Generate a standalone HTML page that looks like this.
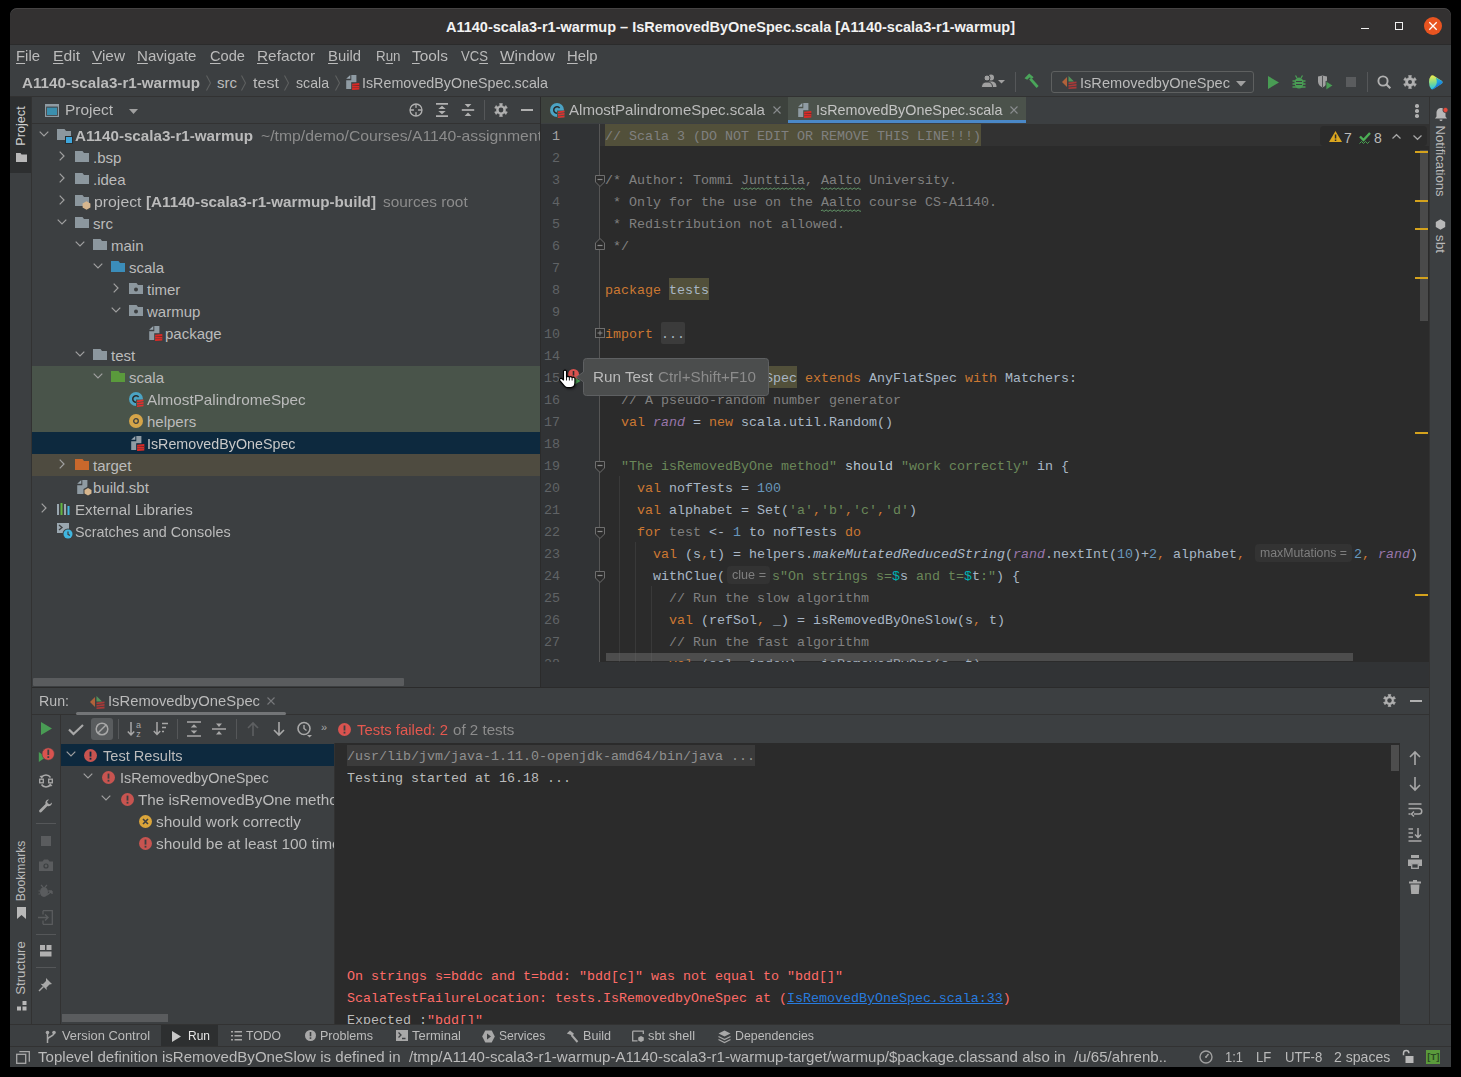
<!DOCTYPE html>
<html><head><meta charset="utf-8">
<style>
*{box-sizing:border-box;margin:0;padding:0}
html,body{width:1461px;height:1077px;overflow:hidden;background:#000}
body{position:relative;font-family:"Liberation Sans",sans-serif;color:#bbbbbb;font-size:15px}
.a{position:absolute}
.t{position:absolute;white-space:pre;line-height:20px}
.m{position:absolute;font-family:"Liberation Mono",monospace;font-size:13.33px;line-height:22px;white-space:pre}
u{text-decoration:underline;text-underline-offset:2px;text-decoration-thickness:1px}
svg{position:absolute;overflow:visible}
i{font-style:italic}
</style></head><body>
<div class="a" style="left:10px;top:8px;width:1441px;height:1059px;background:#3c3f41;border-radius:7px 7px 0 0;overflow:hidden">
<div class="a" style="left:0;top:0;width:1441px;height:36px;background:#333131;border-radius:7px 7px 0 0;box-shadow:inset 0 1px 0 rgba(255,255,255,0.09)"></div>
<div class="a" style="left:0;top:36px;width:1441px;height:1px;background:#262626"></div>
</div>
<div class="a" style="left:10px;top:44px;width:1441px;height:1px;background:#2b2b2b;"></div>
<div class="a" style="left:10px;top:96px;width:1441px;height:1px;background:#323232;"></div>
<div class="a" style="left:10px;top:97px;width:21px;height:927px;background:#3c3f41;"></div>
<div class="a" style="left:31px;top:97px;width:1px;height:927px;background:#323232;"></div>
<div class="a" style="left:540px;top:97px;width:1px;height:590px;background:#2b2b2b;"></div>
<div class="a" style="left:32px;top:123px;width:508px;height:1px;background:#323232;"></div>
<div class="a" style="left:541px;top:124px;width:888px;height:538px;background:#2b2b2b;"></div>
<div class="a" style="left:541px;top:662px;width:888px;height:25px;background:#313335;"></div>
<div class="a" style="left:1429px;top:97px;width:1px;height:927px;background:#323232;"></div>
<div class="a" style="left:32px;top:687px;width:1397px;height:1px;background:#2b2b2b;"></div>
<div class="a" style="left:32px;top:714px;width:1397px;height:1px;background:#323232;"></div>
<div class="a" style="left:335px;top:743px;width:1065px;height:281px;background:#2b2b2b;"></div>
<div class="a" style="left:10px;top:1024px;width:1441px;height:1px;background:#323232;"></div>
<div class="a" style="left:10px;top:1046px;width:1441px;height:1px;background:#323232;"></div>
<div class="t" style="left:446px;top:17.00px;font-size:14.5px;color:#f2f2f2;font-weight:bold;transform:scaleX(1.0000);transform-origin:0 0;">A1140-scala3-r1-warmup – IsRemovedByOneSpec.scala [A1140-scala3-r1-warmup]</div>
<div class="a" style="left:1361px;top:28px;width:8px;height:1.3px;background:#f0f0f0;"></div>
<div class="a" style="left:1394.8px;top:21.8px;width:8.6px;height:8.6px;background:transparent;border:1.4px solid #f0f0f0"></div>
<div class="a" style="left:1423.7px;top:16.7px;width:18.6px;height:18.6px;border-radius:50%;background:#e95420"></div>
<svg style="left:1429px;top:22px;" width="8" height="8" viewBox="0 0 8 8"><path d="M0.3 0.3L7.7 7.7M7.7 0.3L0.3 7.7" stroke="#fff" stroke-width="1.3"/></svg>
<div class="t" style="left:16px;top:46.00px;font-size:15px;color:#bbbbbb;font-weight:normal;transform:scaleX(0.9922);transform-origin:0 0;"><u>F</u>ile</div>
<div class="t" style="left:53px;top:46.00px;font-size:15px;color:#bbbbbb;font-weight:normal;transform:scaleX(1.0441);transform-origin:0 0;"><u>E</u>dit</div>
<div class="t" style="left:92px;top:46.00px;font-size:15px;color:#bbbbbb;font-weight:normal;transform:scaleX(1.0233);transform-origin:0 0;"><u>V</u>iew</div>
<div class="t" style="left:137px;top:46.00px;font-size:15px;color:#bbbbbb;font-weight:normal;transform:scaleX(1.0047);transform-origin:0 0;"><u>N</u>avigate</div>
<div class="t" style="left:210px;top:46.00px;font-size:15px;color:#bbbbbb;font-weight:normal;transform:scaleX(0.9756);transform-origin:0 0;"><u>C</u>ode</div>
<div class="t" style="left:257px;top:46.00px;font-size:15px;color:#bbbbbb;font-weight:normal;transform:scaleX(1.0229);transform-origin:0 0;"><u>R</u>efactor</div>
<div class="t" style="left:328px;top:46.00px;font-size:15px;color:#bbbbbb;font-weight:normal;transform:scaleX(0.9888);transform-origin:0 0;"><u>B</u>uild</div>
<div class="t" style="left:375.5px;top:46.00px;font-size:15px;color:#bbbbbb;font-weight:normal;transform:scaleX(0.8899);transform-origin:0 0;">R<u>u</u>n</div>
<div class="t" style="left:412px;top:46.00px;font-size:15px;color:#bbbbbb;font-weight:normal;transform:scaleX(1.0277);transform-origin:0 0;"><u>T</u>ools</div>
<div class="t" style="left:461px;top:46.00px;font-size:15px;color:#bbbbbb;font-weight:normal;transform:scaleX(0.8749);transform-origin:0 0;">VC<u>S</u></div>
<div class="t" style="left:500px;top:46.00px;font-size:15px;color:#bbbbbb;font-weight:normal;transform:scaleX(1.0304);transform-origin:0 0;"><u>W</u>indow</div>
<div class="t" style="left:567px;top:46.00px;font-size:15px;color:#bbbbbb;font-weight:normal;transform:scaleX(0.9911);transform-origin:0 0;"><u>H</u>elp</div>
<div class="t" style="left:22px;top:73.00px;font-size:15px;color:#bbbbbb;font-weight:bold;transform:scaleX(1.0117);transform-origin:0 0;">A1140-scala3-r1-warmup</div>
<div class="t" style="left:217px;top:73.00px;font-size:15px;color:#bbbbbb;font-weight:normal;transform:scaleX(1.0000);transform-origin:0 0;">src</div>
<div class="t" style="left:253px;top:73.00px;font-size:15px;color:#bbbbbb;font-weight:normal;transform:scaleX(1.0749);transform-origin:0 0;">test</div>
<div class="t" style="left:296px;top:73.00px;font-size:15px;color:#bbbbbb;font-weight:normal;transform:scaleX(0.9420);transform-origin:0 0;">scala</div>
<div class="t" style="left:362px;top:73.00px;font-size:15px;color:#bbbbbb;font-weight:normal;transform:scaleX(0.9533);transform-origin:0 0;">IsRemovedByOneSpec.scala</div>
<svg style="left:204.5px;top:74px;" width="7" height="18" viewBox="0 0 7 18"><path d="M1.5 1.5L5.5 9L1.5 16.5" stroke="#5e6060" stroke-width="1.1" fill="none"/></svg>
<svg style="left:240px;top:74px;" width="7" height="18" viewBox="0 0 7 18"><path d="M1.5 1.5L5.5 9L1.5 16.5" stroke="#5e6060" stroke-width="1.1" fill="none"/></svg>
<svg style="left:283px;top:74px;" width="7" height="18" viewBox="0 0 7 18"><path d="M1.5 1.5L5.5 9L1.5 16.5" stroke="#5e6060" stroke-width="1.1" fill="none"/></svg>
<svg style="left:333.5px;top:74px;" width="7" height="18" viewBox="0 0 7 18"><path d="M1.5 1.5L5.5 9L1.5 16.5" stroke="#5e6060" stroke-width="1.1" fill="none"/></svg>
<svg style="left:45px;top:104px;" width="14" height="13" viewBox="0 0 14 13"><rect x="0" y="0" width="14" height="13" fill="#8f9ba3"/><rect x="1.2" y="2.6" width="11.6" height="9.2" fill="#3c3f41"/><rect x="2" y="3.6" width="10" height="7.4" fill="#3b8fae"/></svg>
<div class="t" style="left:65px;top:100.00px;font-size:15px;color:#bbbbbb;font-weight:normal;transform:scaleX(1.0281);transform-origin:0 0;">Project</div>
<svg style="left:128.6px;top:109px;" width="9" height="5" viewBox="0 0 9 5"><path d="M0 0H9L4.5 5Z" fill="#a0a0a0"/></svg>
<svg style="left:409px;top:103px;" width="14" height="14" viewBox="0 0 14 14"><circle cx="7" cy="7" r="6" stroke="#b0b0b0" stroke-width="1.3" fill="none"/><path d="M7 1V13M1 7H13" stroke="#b0b0b0" stroke-width="1.3"/><circle cx="7" cy="7" r="2.2" fill="#3c3f41"/></svg>
<svg style="left:435px;top:103px;" width="14" height="14" viewBox="0 0 14 14"><path d="M1 0.8H13M1 13.2H13" stroke="#b0b0b0" stroke-width="1.7"/><path d="M3.3 6L7 2.8L10.7 6Z M3.3 8L7 11.2L10.7 8Z" fill="#b0b0b0"/></svg>
<svg style="left:461px;top:103px;" width="14" height="14" viewBox="0 0 14 14"><path d="M0.8 7H13.2" stroke="#b0b0b0" stroke-width="1.7"/><path d="M3.6 1H10.4L7 4.6Z M3.6 13H10.4L7 9.4Z" fill="#b0b0b0"/></svg>
<div class="a" style="left:484px;top:100px;width:1px;height:20px;background:#555759;"></div>
<svg style="left:494px;top:103px;" width="14" height="14" viewBox="0 0 14 14"><path d="M5.52 0.57 L8.48 0.57 L7.90 2.39 L10.55 3.92 L11.83 2.50 L13.31 5.07 L11.44 5.47 L11.44 8.53 L13.31 8.93 L11.83 11.50 L10.55 10.08 L7.90 11.61 L8.48 13.43 L5.52 13.43 L6.10 11.61 L3.45 10.08 L2.17 11.50 L0.69 8.93 L2.56 8.53 L2.56 5.47 L0.69 5.07 L2.17 2.50 L3.45 3.92 L6.10 2.39Z" fill="#b0b0b0" stroke="#b0b0b0" stroke-width="0.6" stroke-linejoin="round"/><circle cx="7" cy="7" r="2.4" fill="#3c3f41"/></svg>
<div class="a" style="left:521px;top:109px;width:12px;height:2px;background:#b0b0b0;"></div>
<div class="a" style="left:32px;top:366px;width:508px;height:66px;background:#49544a;"></div>
<div class="a" style="left:32px;top:432px;width:508px;height:22px;background:#0d293e;"></div>
<div class="a" style="left:32px;top:454px;width:508px;height:22px;background:#4e4b40;"></div>
<svg style="left:38.5px;top:131.0px;" width="10" height="6" viewBox="0 0 10 6"><path d="M0.7 0.7L5 5L9.3 0.7" stroke="#a0a0a0" stroke-width="1.2" fill="none"/></svg>
<svg style="left:57px;top:129px;" width="14" height="11" viewBox="0 0 14 11"><path d="M0 0H7.5L9 2H14V11H0Z" fill="#8c979e"/></svg>
<div class="a" style="left:65px;top:136px;width:8px;height:8px;background:#3ea6dc;border:1px solid #2b2d2e;background-clip:padding-box"></div>
<svg style="left:58.5px;top:151.0px;" width="6" height="10" viewBox="0 0 6 10"><path d="M0.7 0.7L5 5L0.7 9.3" stroke="#a0a0a0" stroke-width="1.2" fill="none"/></svg>
<svg style="left:75px;top:151px;" width="14" height="11" viewBox="0 0 14 11"><path d="M0 0H7.5L9 2H14V11H0Z" fill="#8c979e"/></svg>
<svg style="left:58.5px;top:173.0px;" width="6" height="10" viewBox="0 0 6 10"><path d="M0.7 0.7L5 5L0.7 9.3" stroke="#a0a0a0" stroke-width="1.2" fill="none"/></svg>
<svg style="left:75px;top:173px;" width="14" height="11" viewBox="0 0 14 11"><path d="M0 0H7.5L9 2H14V11H0Z" fill="#8c979e"/></svg>
<svg style="left:58.5px;top:195.0px;" width="6" height="10" viewBox="0 0 6 10"><path d="M0.7 0.7L5 5L0.7 9.3" stroke="#a0a0a0" stroke-width="1.2" fill="none"/></svg>
<svg style="left:75px;top:195px;" width="14" height="11" viewBox="0 0 14 11"><path d="M0 0H7.5L9 2H14V11H0Z" fill="#8c979e"/></svg>
<svg style="left:82px;top:201px;" width="9" height="9" viewBox="0 0 9 9"><path d="M4.5 0.3L8.4 2.4V6.6L4.5 8.7L0.6 6.6V2.4Z" fill="#d7b68e"/></svg>
<svg style="left:56.5px;top:219.0px;" width="10" height="6" viewBox="0 0 10 6"><path d="M0.7 0.7L5 5L9.3 0.7" stroke="#a0a0a0" stroke-width="1.2" fill="none"/></svg>
<svg style="left:75px;top:217px;" width="14" height="11" viewBox="0 0 14 11"><path d="M0 0H7.5L9 2H14V11H0Z" fill="#8c979e"/></svg>
<svg style="left:74.5px;top:241.0px;" width="10" height="6" viewBox="0 0 10 6"><path d="M0.7 0.7L5 5L9.3 0.7" stroke="#a0a0a0" stroke-width="1.2" fill="none"/></svg>
<svg style="left:93px;top:239px;" width="14" height="11" viewBox="0 0 14 11"><path d="M0 0H7.5L9 2H14V11H0Z" fill="#8c979e"/></svg>
<svg style="left:92.5px;top:263.0px;" width="10" height="6" viewBox="0 0 10 6"><path d="M0.7 0.7L5 5L9.3 0.7" stroke="#a0a0a0" stroke-width="1.2" fill="none"/></svg>
<svg style="left:111px;top:261px;" width="14" height="11" viewBox="0 0 14 11"><path d="M0 0H7.5L9 2H14V11H0Z" fill="#3b8dba"/></svg>
<svg style="left:112.5px;top:283.0px;" width="6" height="10" viewBox="0 0 6 10"><path d="M0.7 0.7L5 5L0.7 9.3" stroke="#a0a0a0" stroke-width="1.2" fill="none"/></svg>
<svg style="left:129px;top:283px;" width="14" height="11" viewBox="0 0 14 11"><path d="M0 0H7.5L9 2H14V11H0Z" fill="#8c979e"/><circle cx="7" cy="6.5" r="2" fill="#3c3f41"/></svg>
<svg style="left:110.5px;top:307.0px;" width="10" height="6" viewBox="0 0 10 6"><path d="M0.7 0.7L5 5L9.3 0.7" stroke="#a0a0a0" stroke-width="1.2" fill="none"/></svg>
<svg style="left:129px;top:305px;" width="14" height="11" viewBox="0 0 14 11"><path d="M0 0H7.5L9 2H14V11H0Z" fill="#8c979e"/><circle cx="7" cy="6.5" r="2" fill="#3c3f41"/></svg>
<svg style="left:148.7px;top:326px;" width="15" height="16" viewBox="0 0 15 16"><path d="M0.2 3.8L4.3 0V3.8Z" fill="#9aa7b0"/><path d="M5.3 0H10.4V8H6V14.1H0.2V5.3H5.3Z" fill="#8f9ba3"/><path d="M5.2 7.2H14V15.6H5.2Z" fill="#3c3f41"/><path d="M6.1 8.8L13.3 8.1V14.4L6.1 14.9Z" fill="#df2a26"/><path d="M6.1 10.4H13.3V11M6.1 12.6H13.3" stroke="#7c3434" stroke-width="0.7"/></svg>
<svg style="left:74.5px;top:351.0px;" width="10" height="6" viewBox="0 0 10 6"><path d="M0.7 0.7L5 5L9.3 0.7" stroke="#a0a0a0" stroke-width="1.2" fill="none"/></svg>
<svg style="left:93px;top:349px;" width="14" height="11" viewBox="0 0 14 11"><path d="M0 0H7.5L9 2H14V11H0Z" fill="#8c979e"/></svg>
<svg style="left:92.5px;top:373.0px;" width="10" height="6" viewBox="0 0 10 6"><path d="M0.7 0.7L5 5L9.3 0.7" stroke="#a0a0a0" stroke-width="1.2" fill="none"/></svg>
<svg style="left:111px;top:371px;" width="14" height="11" viewBox="0 0 14 11"><path d="M0 0H7.5L9 2H14V11H0Z" fill="#5a9a3c"/></svg>
<svg style="left:129px;top:392px;" width="15" height="15" viewBox="0 0 15 15"><circle cx="7" cy="7" r="7" fill="#4ba3c3"/><path d="M9.6 5.2A3.2 3.2 0 1 0 9.6 8.8" stroke="#2b2b2b" stroke-width="1.5" fill="none"/><path d="M7 7.5H14.5V15H7Z" fill="#49544a"/><path d="M8 8.6L14.5 7.6V9.3L8 10.3Z M8 11L14.5 10V11.7L8 12.7Z M8 13.4L14.5 12.4V14.2L8 15Z" fill="#e0302f"/></svg>
<svg style="left:129px;top:414px;" width="14" height="14" viewBox="0 0 14 14"><circle cx="7" cy="7" r="7" fill="#d5a549"/><circle cx="7" cy="7" r="2.3" stroke="#3c3f41" stroke-width="1.3" fill="none"/></svg>
<svg style="left:130.7px;top:436px;" width="15" height="16" viewBox="0 0 15 16"><path d="M0.2 3.8L4.3 0V3.8Z" fill="#9aa7b0"/><path d="M5.3 0H10.4V8H6V14.1H0.2V5.3H5.3Z" fill="#8f9ba3"/><path d="M5.2 7.2H14V15.6H5.2Z" fill="#0d293e"/><path d="M6.1 8.8L13.3 8.1V14.4L6.1 14.9Z" fill="#df2a26"/><path d="M6.1 10.4H13.3V11M6.1 12.6H13.3" stroke="#7c3434" stroke-width="0.7"/></svg>
<svg style="left:58.5px;top:459.0px;" width="6" height="10" viewBox="0 0 6 10"><path d="M0.7 0.7L5 5L0.7 9.3" stroke="#a0a0a0" stroke-width="1.2" fill="none"/></svg>
<svg style="left:75px;top:459px;" width="14" height="11" viewBox="0 0 14 11"><path d="M0 0H7.5L9 2H14V11H0Z" fill="#c9682c"/></svg>
<svg style="left:77px;top:480px;" width="16" height="15" viewBox="0 0 16 15"><path d="M0.2 3.8L4.3 0V3.8Z" fill="#9aa7b0"/><path d="M5.3 0H10.4V14.1H0.2V5.3H5.3Z" fill="#8f9ba3"/><path d="M11 6.5L15.5 9V14L11 16.5L6.5 14V9Z" fill="#3c3f41"/><path d="M11 8L14.5 10V13.6L11 15.5L7.5 13.6V10Z" fill="#d7b68e"/></svg>
<svg style="left:40.5px;top:503.0px;" width="6" height="10" viewBox="0 0 6 10"><path d="M0.7 0.7L5 5L0.7 9.3" stroke="#a0a0a0" stroke-width="1.2" fill="none"/></svg>
<svg style="left:57px;top:503px;" width="14" height="12" viewBox="0 0 14 12"><rect x="0" y="1" width="2" height="11" fill="#9aa7b0"/><rect x="3.5" y="0" width="2" height="12" fill="#62b543"/><rect x="7" y="1" width="2" height="11" fill="#9aa7b0"/><rect x="10.5" y="3" width="2" height="9" fill="#40b6e0"/></svg>
<svg style="left:57px;top:523px;" width="16" height="16" viewBox="0 0 16 16"><path d="M0 0H12V10H0Z" fill="#9aa7b0"/><path d="M2 2L5 4.5L2 7" stroke="#3c3f41" stroke-width="1.3" fill="none"/><circle cx="11" cy="11" r="5.5" fill="#3c3f41"/><circle cx="11" cy="11" r="4.5" fill="#40b6e0"/><path d="M11 8.5V11.3L13 12.5" stroke="#3c3f41" stroke-width="1.2" fill="none"/></svg>
<div class="t" style="left:75px;top:125.50px;font-size:15px;color:#bbbbbb;font-weight:bold;transform:scaleX(1.0117);transform-origin:0 0;">A1140-scala3-r1-warmup</div>
<div class="a" style="left:260px;top:124px;width:280px;height:22px;overflow:hidden">
<div class="t" style="left:0.5px;top:1.50px;font-size:15px;color:#8c8c8c;font-weight:normal;transform:scaleX(1.0494);transform-origin:0 0;">~/tmp/demo/Courses/A1140-assignment</div>
</div>
<div class="t" style="left:93px;top:147.50px;font-size:15px;color:#bbbbbb;font-weight:normal;">.bsp</div>
<div class="t" style="left:93px;top:169.50px;font-size:15px;color:#bbbbbb;font-weight:normal;">.idea</div>
<div class="t" style="left:93.5px;top:191.50px;font-size:15px;color:#bbbbbb;font-weight:normal;transform:scaleX(1.0548);transform-origin:0 0;">project</div>
<div class="t" style="left:145.5px;top:191.50px;font-size:15px;color:#bbbbbb;font-weight:bold;transform:scaleX(1.0143);transform-origin:0 0;">[A1140-scala3-r1-warmup-build]</div>
<div class="t" style="left:383.4px;top:191.50px;font-size:15px;color:#8c8c8c;font-weight:normal;transform:scaleX(1.0261);transform-origin:0 0;">sources root</div>
<div class="t" style="left:93px;top:213.50px;font-size:15px;color:#bbbbbb;font-weight:normal;">src</div>
<div class="t" style="left:111px;top:235.50px;font-size:15px;color:#bbbbbb;font-weight:normal;">main</div>
<div class="t" style="left:129px;top:257.50px;font-size:15px;color:#bbbbbb;font-weight:normal;">scala</div>
<div class="t" style="left:147px;top:279.50px;font-size:15px;color:#bbbbbb;font-weight:normal;">timer</div>
<div class="t" style="left:147px;top:301.50px;font-size:15px;color:#bbbbbb;font-weight:normal;">warmup</div>
<div class="t" style="left:165px;top:323.50px;font-size:15px;color:#bbbbbb;font-weight:normal;">package</div>
<div class="t" style="left:111px;top:345.50px;font-size:15px;color:#bbbbbb;font-weight:normal;">test</div>
<div class="t" style="left:129px;top:367.50px;font-size:15px;color:#bbbbbb;font-weight:normal;">scala</div>
<div class="t" style="left:147px;top:389.50px;font-size:15px;color:#bbbbbb;font-weight:normal;transform:scaleX(1.0179);transform-origin:0 0;">AlmostPalindromeSpec</div>
<div class="t" style="left:147px;top:411.50px;font-size:15px;color:#bbbbbb;font-weight:normal;">helpers</div>
<div class="t" style="left:147px;top:433.50px;font-size:15px;color:#c8c8c8;font-weight:normal;transform:scaleX(0.9524);transform-origin:0 0;">IsRemovedByOneSpec</div>
<div class="t" style="left:93px;top:455.50px;font-size:15px;color:#bbbbbb;font-weight:normal;">target</div>
<div class="t" style="left:93px;top:477.50px;font-size:15px;color:#bbbbbb;font-weight:normal;">build.sbt</div>
<div class="t" style="left:75px;top:499.50px;font-size:15px;color:#bbbbbb;font-weight:normal;transform:scaleX(1.0093);transform-origin:0 0;">External Libraries</div>
<div class="t" style="left:75px;top:521.50px;font-size:15px;color:#bbbbbb;font-weight:normal;transform:scaleX(0.9570);transform-origin:0 0;">Scratches and Consoles</div>
<div class="a" style="left:33px;top:678px;width:371px;height:8px;background:#5a5c5e;border-radius:1px"></div>
<div class="a" style="left:541px;top:97px;width:247px;height:26px;background:#3d423d;"></div>
<div class="a" style="left:788px;top:97px;width:238px;height:26px;background:#4b524b;"></div>
<div class="a" style="left:788px;top:120px;width:238px;height:3px;background:#4a88c7;"></div>
<svg style="left:550px;top:103px;" width="15" height="15" viewBox="0 0 15 15"><circle cx="7" cy="7" r="7" fill="#4ba3c3"/><path d="M9.6 5.2A3.2 3.2 0 1 0 9.6 8.8" stroke="#2b2b2b" stroke-width="1.5" fill="none"/><path d="M7 7.5H14.5V15H7Z" fill="#49544a"/><path d="M8 8.6L14.5 7.6V9.3L8 10.3Z M8 11L14.5 10V11.7L8 12.7Z M8 13.4L14.5 12.4V14.2L8 15Z" fill="#e0302f"/></svg>
<div class="t" style="left:569px;top:100.00px;font-size:15px;color:#bbbbbb;font-weight:normal;transform:scaleX(1.0046);transform-origin:0 0;">AlmostPalindromeSpec.scala</div>
<svg style="left:773px;top:106px;" width="8" height="8" viewBox="0 0 8 8"><path d="M0.5 0.5L7.5 7.5M7.5 0.5L0.5 7.5" stroke="#8a8d8f" stroke-width="1.1"/></svg>
<svg style="left:797.7px;top:103px;" width="15" height="16" viewBox="0 0 15 16"><path d="M0.2 3.8L4.3 0V3.8Z" fill="#9aa7b0"/><path d="M5.3 0H10.4V8H6V14.1H0.2V5.3H5.3Z" fill="#8f9ba3"/><path d="M5.2 7.2H14V15.6H5.2Z" fill="#4b524b"/><path d="M6.1 8.8L13.3 8.1V14.4L6.1 14.9Z" fill="#df2a26"/><path d="M6.1 10.4H13.3V11M6.1 12.6H13.3" stroke="#7c3434" stroke-width="0.7"/></svg>
<div class="t" style="left:815.5px;top:100.00px;font-size:15px;color:#c4c4c4;font-weight:normal;transform:scaleX(0.9559);transform-origin:0 0;">IsRemovedByOneSpec.scala</div>
<svg style="left:1010px;top:106px;" width="8" height="8" viewBox="0 0 8 8"><path d="M0.5 0.5L7.5 7.5M7.5 0.5L0.5 7.5" stroke="#8a8d8f" stroke-width="1.1"/></svg>
<div class="a" style="left:1415px;top:104px;width:3.5px;height:3.5px;border-radius:50%;background:#b0b0b0"></div>
<div class="a" style="left:1415px;top:109px;width:3.5px;height:3.5px;border-radius:50%;background:#b0b0b0"></div>
<div class="a" style="left:1415px;top:114px;width:3.5px;height:3.5px;border-radius:50%;background:#b0b0b0"></div>
<div class="a" style="left:541px;top:124px;width:58px;height:538px;background:#313335;"></div>
<div class="a" style="left:599px;top:124px;width:1px;height:538px;background:#555555;"></div>
<div class="a" style="left:600px;top:124px;width:829px;height:22px;background:#323232;"></div>
<div class="a" style="left:605px;top:124px;width:376px;height:22px;background:#52503a;"></div>
<div class="a" style="left:669px;top:278px;width:40px;height:22px;background:#52503a;"></div>
<div class="a" style="left:661px;top:322px;width:24px;height:22px;background:#3b3b3b;border-radius:2px"></div>
<div class="a" style="left:765px;top:366px;width:32px;height:22px;background:#52503a;"></div>
<div class="a" style="left:541px;top:124px;width:888px;height:538px;overflow:hidden">
<div class="m" style="left:11px;top:2px;color:#a4a3a3">1</div>
<div class="m" style="left:64px;top:2px;color:#a9b7c6"><span style="color:#808080;">// Scala 3 (DO NOT EDIT OR REMOVE THIS LINE!!!)</span></div>
<div class="m" style="left:11px;top:24px;color:#606366">2</div>
<div class="m" style="left:11px;top:46px;color:#606366">3</div>
<div class="m" style="left:64px;top:46px;color:#a9b7c6"><span style="color:#808080;">/* Author: Tommi Junttila, Aalto University.</span></div>
<div class="m" style="left:11px;top:68px;color:#606366">4</div>
<div class="m" style="left:64px;top:68px;color:#a9b7c6"><span style="color:#808080;"> * Only for the use on the Aalto course CS-A1140.</span></div>
<div class="m" style="left:11px;top:90px;color:#606366">5</div>
<div class="m" style="left:64px;top:90px;color:#a9b7c6"><span style="color:#808080;"> * Redistribution not allowed.</span></div>
<div class="m" style="left:11px;top:112px;color:#606366">6</div>
<div class="m" style="left:64px;top:112px;color:#a9b7c6"><span style="color:#808080;"> */</span></div>
<div class="m" style="left:11px;top:134px;color:#606366">7</div>
<div class="m" style="left:11px;top:156px;color:#606366">8</div>
<div class="m" style="left:64px;top:156px;color:#a9b7c6"><span style="color:#cc7832;">package </span>tests</div>
<div class="m" style="left:11px;top:178px;color:#606366">9</div>
<div class="m" style="left:3px;top:200px;color:#606366">10</div>
<div class="m" style="left:64px;top:200px;color:#a9b7c6"><span style="color:#cc7832;">import </span><span style="color:#a9b7c6;">...</span></div>
<div class="m" style="left:3px;top:222px;color:#606366">14</div>
<div class="m" style="left:3px;top:244px;color:#606366">15</div>
<div class="m" style="left:64px;top:244px;color:#a9b7c6"><span style="color:#cc7832;">class </span>IsRemovedByOneSpec <span style="color:#cc7832;">extends </span>AnyFlatSpec <span style="color:#cc7832;">with </span>Matchers:</div>
<div class="m" style="left:3px;top:266px;color:#606366">16</div>
<div class="m" style="left:64px;top:266px;color:#a9b7c6"><span style="color:#808080;">  // A pseudo-random number generator</span></div>
<div class="m" style="left:3px;top:288px;color:#606366">17</div>
<div class="m" style="left:64px;top:288px;color:#a9b7c6">  <span style="color:#cc7832;">val </span><i style="color:#9876aa">rand</i> = <span style="color:#cc7832;">new </span>scala.util.Random()</div>
<div class="m" style="left:3px;top:310px;color:#606366">18</div>
<div class="m" style="left:3px;top:332px;color:#606366">19</div>
<div class="m" style="left:64px;top:332px;color:#a9b7c6">  <span style="color:#6a8759;">"The isRemovedByOne method"</span><span style="color:#bcc8d4;"> should </span><span style="color:#6a8759;">"work correctly"</span> in {</div>
<div class="m" style="left:3px;top:354px;color:#606366">20</div>
<div class="m" style="left:64px;top:354px;color:#a9b7c6">    <span style="color:#cc7832;">val </span>nofTests = <span style="color:#6897bb;">100</span></div>
<div class="m" style="left:3px;top:376px;color:#606366">21</div>
<div class="m" style="left:64px;top:376px;color:#a9b7c6">    <span style="color:#cc7832;">val </span>alphabet = Set(<span style="color:#6a8759;">'a'</span><span style="color:#cc7832;">,</span><span style="color:#6a8759;">'b'</span><span style="color:#cc7832;">,</span><span style="color:#6a8759;">'c'</span><span style="color:#cc7832;">,</span><span style="color:#6a8759;">'d'</span>)</div>
<div class="m" style="left:3px;top:398px;color:#606366">22</div>
<div class="m" style="left:64px;top:398px;color:#a9b7c6">    <span style="color:#cc7832;">for </span><span style="color:#808080;">test</span> &lt;- <span style="color:#6897bb;">1</span> to nofTests <span style="color:#cc7832;">do</span></div>
<div class="m" style="left:3px;top:420px;color:#606366">23</div>
<div class="m" style="left:64px;top:420px;color:#a9b7c6">      <span style="color:#cc7832;">val </span>(s<span style="color:#cc7832;">,</span>t) = helpers.<i>makeMutatedReducedString</i>(<i style="color:#9876aa">rand</i>.nextInt(<span style="color:#6897bb;">10</span>)+<span style="color:#6897bb;">2</span><span style="color:#cc7832;">,</span> alphabet<span style="color:#cc7832;">,</span></div>
<div class="m" style="left:3px;top:442px;color:#606366">24</div>
<div class="m" style="left:64px;top:442px;color:#a9b7c6">      withClue(</div>
<div class="m" style="left:3px;top:464px;color:#606366">25</div>
<div class="m" style="left:64px;top:464px;color:#a9b7c6"><span style="color:#808080;">        // Run the slow algorithm</span></div>
<div class="m" style="left:3px;top:486px;color:#606366">26</div>
<div class="m" style="left:64px;top:486px;color:#a9b7c6">        <span style="color:#cc7832;">val </span>(refSol<span style="color:#cc7832;">,</span> _) = isRemovedByOneSlow(s<span style="color:#cc7832;">,</span> t)</div>
<div class="m" style="left:3px;top:508px;color:#606366">27</div>
<div class="m" style="left:64px;top:508px;color:#a9b7c6"><span style="color:#808080;">        // Run the fast algorithm</span></div>
<div class="m" style="left:3px;top:530px;color:#606366">28</div>
<div class="m" style="left:64px;top:530px;color:#a9b7c6">        <span style="color:#cc7832;">val </span>(sol<span style="color:#cc7832;">,</span> index) = isRemovedByOne(s<span style="color:#cc7832;">,</span> t)</div>
</div>
<svg style="left:594.5px;top:174.5px;" width="10" height="12" viewBox="0 0 10 12"><path d="M0.5 0.5H9.5V7L5 11.5L0.5 7Z" fill="#2b2b2b" stroke="#6e6e6e" stroke-width="1"/><path d="M2.5 4.5H7.5" stroke="#8a8a8a" stroke-width="1.2"/></svg>
<svg style="left:594.5px;top:238px;" width="10" height="12" viewBox="0 0 10 12"><path d="M0.5 11.5H9.5V5L5 0.5L0.5 5Z" fill="#2b2b2b" stroke="#6e6e6e" stroke-width="1"/><path d="M2.5 7.5H7.5" stroke="#8a8a8a" stroke-width="1.2"/></svg>
<svg style="left:594.5px;top:328px;" width="10" height="10" viewBox="0 0 10 10"><rect x="0.5" y="0.5" width="9" height="9" fill="#2b2b2b" stroke="#6e6e6e" stroke-width="1"/><path d="M2.5 5H7.5M5 2.5V7.5" stroke="#8a8a8a" stroke-width="1"/></svg>
<svg style="left:594.5px;top:460.5px;" width="10" height="12" viewBox="0 0 10 12"><path d="M0.5 0.5H9.5V7L5 11.5L0.5 7Z" fill="#2b2b2b" stroke="#6e6e6e" stroke-width="1"/><path d="M2.5 4.5H7.5" stroke="#8a8a8a" stroke-width="1.2"/></svg>
<svg style="left:594.5px;top:526.5px;" width="10" height="12" viewBox="0 0 10 12"><path d="M0.5 0.5H9.5V7L5 11.5L0.5 7Z" fill="#2b2b2b" stroke="#6e6e6e" stroke-width="1"/><path d="M2.5 4.5H7.5" stroke="#8a8a8a" stroke-width="1.2"/></svg>
<svg style="left:594.5px;top:570.5px;" width="10" height="12" viewBox="0 0 10 12"><path d="M0.5 0.5H9.5V7L5 11.5L0.5 7Z" fill="#2b2b2b" stroke="#6e6e6e" stroke-width="1"/><path d="M2.5 4.5H7.5" stroke="#8a8a8a" stroke-width="1.2"/></svg>
<div class="a" style="left:619px;top:476px;width:1px;height:186px;background:#393939;"></div>
<div class="a" style="left:635px;top:542px;width:1px;height:120px;background:#393939;"></div>
<div class="a" style="left:651px;top:586px;width:1px;height:76px;background:#393939;"></div>
<svg style="left:741px;top:187px;" width="64" height="3" viewBox="0 0 64 3"><path d="M0 2 Q1 0 2 1.5 T4 2 Q5 0 6 1.5 T8 2 Q9 0 10 1.5 T12 2 Q13 0 14 1.5 T16 2 Q17 0 18 1.5 T20 2 Q21 0 22 1.5 T24 2 Q25 0 26 1.5 T28 2 Q29 0 30 1.5 T32 2 Q33 0 34 1.5 T36 2 Q37 0 38 1.5 T40 2 Q41 0 42 1.5 T44 2 Q45 0 46 1.5 T48 2 Q49 0 50 1.5 T52 2 Q53 0 54 1.5 T56 2 Q57 0 58 1.5 T60 2 Q61 0 62 1.5 T64 2" stroke="#659c6b" stroke-width="0.9" fill="none"/></svg>
<svg style="left:821px;top:187px;" width="40" height="3" viewBox="0 0 40 3"><path d="M0 2 Q1 0 2 1.5 T4 2 Q5 0 6 1.5 T8 2 Q9 0 10 1.5 T12 2 Q13 0 14 1.5 T16 2 Q17 0 18 1.5 T20 2 Q21 0 22 1.5 T24 2 Q25 0 26 1.5 T28 2 Q29 0 30 1.5 T32 2 Q33 0 34 1.5 T36 2 Q37 0 38 1.5 T40 2" stroke="#659c6b" stroke-width="0.9" fill="none"/></svg>
<svg style="left:821px;top:209px;" width="40" height="3" viewBox="0 0 40 3"><path d="M0 2 Q1 0 2 1.5 T4 2 Q5 0 6 1.5 T8 2 Q9 0 10 1.5 T12 2 Q13 0 14 1.5 T16 2 Q17 0 18 1.5 T20 2 Q21 0 22 1.5 T24 2 Q25 0 26 1.5 T28 2 Q29 0 30 1.5 T32 2 Q33 0 34 1.5 T36 2 Q37 0 38 1.5 T40 2" stroke="#659c6b" stroke-width="0.9" fill="none"/></svg>
<div class="a" style="left:1255px;top:544px;width:97px;height:18px;background:#333333;border-radius:4px"></div>
<div class="t" style="left:1260px;top:542.50px;font-size:12px;color:#7f7f7f;font-weight:normal;transform:scaleX(1.0230);transform-origin:0 0;">maxMutations =</div>
<div class="a" style="left:727px;top:566px;width:43px;height:18px;background:#333333;border-radius:4px"></div>
<div class="t" style="left:732px;top:564.50px;font-size:12px;color:#7f7f7f;font-weight:normal;transform:scaleX(1.0507);transform-origin:0 0;">clue =</div>
<div class="m" style="left:1354px;top:544px;color:#a9b7c6;"><span style="color:#6897bb;">2</span><span style="color:#cc7832;">,</span> <i style="color:#9876aa">rand</i>)</div>
<div class="m" style="left:772px;top:566px;color:#a9b7c6;"><span style="color:#6a8759;">s"On strings s=</span><span style="color:#00b1b3;">$</span>s<span style="color:#6a8759;"> and t=</span><span style="color:#00b1b3;">$</span>t<span style="color:#6a8759;">:"</span>) {</div>
<svg style="left:568px;top:369px;" width="12" height="12" viewBox="0 0 12 12"><circle cx="5.5" cy="5.5" r="5.5" fill="#d9534f"/><rect x="4.7" y="2" width="1.6" height="4.5" fill="#2b2b2b"/><rect x="4.7" y="7.5" width="1.6" height="1.6" fill="#2b2b2b"/></svg>
<svg style="left:574px;top:377px;" width="7" height="8" viewBox="0 0 7 8"><path d="M0 0L6.5 4L0 8Z" fill="#499c54"/></svg>
<svg style="left:559px;top:369px;filter:drop-shadow(1px 1px 1px rgba(0,0,0,0.5))" width="18" height="20" viewBox="0 0 18 20"><path d="M4.5 1.8Q6 0.3 7.5 1.8V8Q9 6.8 10.4 8Q11.9 7.1 13.1 8.4Q14.6 7.8 15.9 9.2V13.8Q15.9 18.2 12 18.6H8.6Q6.6 18.6 5.5 17.1L0.9 11.6Q0.2 10.3 1.3 9.6Q2.5 9 3.5 10L4.5 11Z" fill="#fff" stroke="#000" stroke-width="1.1" stroke-linejoin="round"/><path d="M7.5 8V11.5M10.4 8V11.5M13.1 8.4V11.5" stroke="#000" stroke-width="0.9"/></svg>
<svg style="left:576px;top:358px;" width="193" height="38" viewBox="0 0 193 38"><path d="M10.5 0.5H189.5A3 3 0 0 1 192.5 3.5V34.5A3 3 0 0 1 189.5 37.5H10.5A3 3 0 0 1 7.5 34.5V24L0.5 19L7.5 14V3.5A3 3 0 0 1 10.5 0.5Z" fill="#4b4d4d" stroke="#5e6062" stroke-width="1"/></svg>
<div class="t" style="left:593px;top:367.00px;font-size:15px;color:#bbbbbb;font-weight:normal;transform:scaleX(1.0180);transform-origin:0 0;">Run Test</div>
<div class="t" style="left:658px;top:367.00px;font-size:15px;color:#8c8c8c;font-weight:normal;transform:scaleX(1.0132);transform-origin:0 0;">Ctrl+Shift+F10</div>
<div class="a" style="left:1320px;top:126px;width:107px;height:20px;background:#2b2b2b;border-radius:4px"></div>
<svg style="left:1329px;top:131px;" width="13" height="11" viewBox="0 0 13 11"><path d="M6.5 0L13 11H0Z" fill="#dba61f"/><rect x="5.8" y="3.5" width="1.5" height="4" fill="#2b2b2b"/><rect x="5.8" y="8.5" width="1.5" height="1.5" fill="#2b2b2b"/></svg>
<div class="t" style="left:1344px;top:127.50px;font-size:14px;color:#bbbbbb;font-weight:normal;">7</div>
<svg style="left:1359px;top:132px;" width="12" height="12" viewBox="0 0 12 12"><path d="M1 4.5L4.5 8L11 1" stroke="#4cae55" stroke-width="2.4" fill="none"/><path d="M0.5 11.5L2.5 9.5L4.5 11.5L6.5 9.5L8.5 11.5L10.5 9.5" stroke="#4cae55" stroke-width="0.9" fill="none"/></svg>
<div class="t" style="left:1374px;top:127.50px;font-size:14px;color:#bbbbbb;font-weight:normal;">8</div>
<svg style="left:1392px;top:134px;" width="9" height="5" viewBox="0 0 9 5"><path d="M0.5 4.5L4.5 0.7L8.5 4.5" stroke="#a8a8a8" stroke-width="1.2" fill="none"/></svg>
<svg style="left:1413px;top:135px;" width="9" height="5" viewBox="0 0 9 5"><path d="M0.5 0.5L4.5 4.3L8.5 0.5" stroke="#a8a8a8" stroke-width="1.2" fill="none"/></svg>
<div class="a" style="left:1420px;top:150px;width:8px;height:171px;background:#4a4a4a;"></div>
<div class="a" style="left:1415px;top:150.5px;width:13px;height:2px;background:#d4a21d;"></div>
<div class="a" style="left:1415px;top:199.5px;width:13px;height:2px;background:#d4a21d;"></div>
<div class="a" style="left:1415px;top:227.5px;width:13px;height:2px;background:#d4a21d;"></div>
<div class="a" style="left:1415px;top:276.5px;width:13px;height:2px;background:#d4a21d;"></div>
<div class="a" style="left:1415px;top:431.5px;width:13px;height:2px;background:#d4a21d;"></div>
<div class="a" style="left:1415px;top:593.5px;width:13px;height:2px;background:#d4a21d;"></div>
<div class="a" style="left:606px;top:653px;width:747px;height:8px;background:rgba(120,120,120,0.45);"></div>
<div class="a" style="left:10px;top:97px;width:21px;height:76px;background:#2d2f30;"></div>
<div class="t" style="left:21px;top:126px;width:0;height:0"><div style="position:absolute;left:0;top:0;transform:translate(-50%,-50%) rotate(-90deg) scaleX(0.973);font-size:13px;color:#d0d0d0;line-height:16px">Project</div></div>
<svg style="left:16px;top:153px;" width="11" height="9" viewBox="0 0 11 9"><path d="M0 0H4.5L5.5 1.5H11V9H0Z" fill="#b8b8b8"/></svg>
<div class="t" style="left:21px;top:871px;width:0;height:0"><div style="position:absolute;left:0;top:0;transform:translate(-50%,-50%) rotate(-90deg) scaleX(0.931);font-size:13px;color:#bbbbbb;line-height:16px">Bookmarks</div></div>
<svg style="left:17px;top:907px;" width="9" height="12" viewBox="0 0 9 12"><path d="M0 0H9V12L4.5 8L0 12Z" fill="#b8b8b8"/></svg>
<div class="t" style="left:21px;top:968px;width:0;height:0"><div style="position:absolute;left:0;top:0;transform:translate(-50%,-50%) rotate(-90deg) scaleX(1.015);font-size:13px;color:#bbbbbb;line-height:16px">Structure</div></div>
<svg style="left:17px;top:1001px;" width="10" height="10" viewBox="0 0 10 10"><rect x="0" y="5.5" width="4" height="4" fill="#b8b8b8"/><rect x="5.5" y="5.5" width="4" height="4" fill="#b8b8b8"/><rect x="5.5" y="0" width="4" height="4" fill="#b8b8b8"/></svg>
<div class="t" style="left:1440px;top:161px;width:0;height:0"><div style="position:absolute;left:0;top:0;transform:translate(-50%,-50%) rotate(90deg) scaleX(1.003);font-size:13px;color:#bbbbbb;line-height:16px">Notifications</div></div>
<svg style="left:1434px;top:107px;" width="14" height="15" viewBox="0 0 14 15"><path d="M7 1C9.8 1 11.5 3.2 11.5 6V9.5L13 11.5H1L2.5 9.5V6C2.5 3.2 4.2 1 7 1Z" fill="#b8b8b8"/><path d="M5.5 12.5H8.5A1.5 1.5 0 0 1 5.5 12.5Z" fill="#b8b8b8"/><circle cx="11.5" cy="3" r="2.6" fill="#e5493a" stroke="#3c3f41" stroke-width="0.8"/></svg>
<svg style="left:1435px;top:219px;" width="11" height="11" viewBox="0 0 11 11"><path d="M5.5 0.3L10.2 2.9V8.1L5.5 10.7L0.8 8.1V2.9Z" fill="#b8b8b8"/></svg>
<div class="t" style="left:1440px;top:244px;width:0;height:0"><div style="position:absolute;left:0;top:0;transform:translate(-50%,-50%) rotate(90deg) scaleX(1.058);font-size:13px;color:#bbbbbb;line-height:16px">sbt</div></div>
<div class="t" style="left:38.6px;top:691.00px;font-size:15px;color:#bbbbbb;font-weight:normal;transform:scaleX(0.9467);transform-origin:0 0;">Run:</div>
<svg style="left:90px;top:696px;" width="15" height="13" viewBox="0 0 15 13"><path d="M5 1V11L0 6Z" fill="#b0623a"/><path d="M6.5 0L12 5.5H6.5Z" fill="#52935a"/><path d="M6.5 6.5L14.5 5.5V7.2L6.5 8.2Z M6.5 9L14.5 8V9.7L6.5 10.7Z M6.5 11.5L14.5 10.5V12.5L6.5 13Z" fill="#a83a38"/></svg>
<div class="t" style="left:108px;top:691.00px;font-size:15px;color:#bbbbbb;font-weight:normal;transform:scaleX(0.9854);transform-origin:0 0;">IsRemovedbyOneSpec</div>
<svg style="left:267px;top:697px;" width="8" height="8" viewBox="0 0 8 8"><path d="M0.5 0.5L7.5 7.5M7.5 0.5L0.5 7.5" stroke="#77797b" stroke-width="1.1"/></svg>
<div class="a" style="left:76px;top:712px;width:210px;height:2.5px;background:#737577;border-radius:2px"></div>
<svg style="left:1383px;top:694px;" width="13" height="13" viewBox="0 0 13 13"><path d="M5.11 0.46 L7.89 0.46 L7.34 2.18 L9.82 3.61 L11.03 2.27 L12.43 4.69 L10.66 5.07 L10.66 7.93 L12.43 8.31 L11.03 10.73 L9.82 9.39 L7.34 10.82 L7.89 12.54 L5.11 12.54 L5.66 10.82 L3.18 9.39 L1.97 10.73 L0.57 8.31 L2.34 7.93 L2.34 5.07 L0.57 4.69 L1.97 2.27 L3.18 3.61 L5.66 2.18Z" fill="#b0b0b0" stroke="#b0b0b0" stroke-width="0.6" stroke-linejoin="round"/><circle cx="6.5" cy="6.5" r="2.2" fill="#3c3f41"/></svg>
<div class="a" style="left:1410px;top:700px;width:12px;height:2px;background:#b0b0b0;"></div>
<div class="a" style="left:60px;top:715px;width:1px;height:309px;background:#323232;"></div>
<svg style="left:41px;top:722px;" width="11" height="13" viewBox="0 0 11 13"><path d="M0 0L11 6.5L0 13Z" fill="#499c54"/></svg>
<svg style="left:38px;top:747px;" width="18" height="16" viewBox="0 0 18 16"><path d="M0.8 5L8 10L0.8 15Z" fill="#499c54"/><circle cx="10.2" cy="7" r="6.2" fill="#d9534f" stroke="#3c3f41" stroke-width="0.6"/><rect x="9.4" y="2.6" width="1.8" height="5.4" fill="#3c3f41"/><rect x="9.4" y="9.2" width="1.8" height="1.8" fill="#3c3f41"/></svg>
<svg style="left:39px;top:773px;" width="14" height="16" viewBox="0 0 14 16"><path d="M2.5 4.5A5.3 5.3 0 0 1 11.5 4.5M11.5 11.5A5.3 5.3 0 0 1 2.5 11.5" stroke="#a8a8a8" stroke-width="1.5" fill="none"/><path d="M0.5 3L3.5 2.5L3 6Z M13.5 13L10.5 13.5L11 10Z" fill="#a8a8a8"/><rect x="0.7" y="6.2" width="3.6" height="3.6" fill="none" stroke="#a8a8a8" stroke-width="1.3"/><rect x="9.7" y="6.2" width="3.6" height="3.6" fill="none" stroke="#a8a8a8" stroke-width="1.3"/></svg>
<svg style="left:39px;top:799px;" width="14" height="15" viewBox="0 0 14 15"><path d="M13 3.5A3.5 3.5 0 0 1 8.4 7L2.5 13A1.4 1.4 0 0 1 0.5 11L6.5 5A3.5 3.5 0 0 1 10 0.5L8 2.8L9 4.5L10.8 5.3Z" fill="#a8a8a8"/></svg>
<div class="a" style="left:36px;top:823px;width:20px;height:1px;background:#555759;"></div>
<div class="a" style="left:41px;top:836px;width:10px;height:10px;background:#5a5c5e;"></div>
<svg style="left:39px;top:859px;" width="14" height="12" viewBox="0 0 14 12"><path d="M0 2.5H3.5L5 0.5H9L10.5 2.5H14V12H0Z" fill="#5a5c5e"/><circle cx="7" cy="7" r="2.6" fill="#3c3f41"/><circle cx="7" cy="7" r="1.4" fill="#5a5c5e"/></svg>
<svg style="left:38px;top:884px;" width="15" height="14" viewBox="0 0 15 14"><ellipse cx="6" cy="8" rx="4" ry="5" fill="#5a5c5e"/><path d="M3 1L5 3M9 1L7 3M0.5 7H2M10 7H11.5M0.5 10H2" stroke="#5a5c5e" stroke-width="1.2"/><path d="M9 11L14 7M14 7V10M14 7H11" stroke="#5a5c5e" stroke-width="1.4" fill="none"/></svg>
<svg style="left:38px;top:910px;" width="15" height="15" viewBox="0 0 15 15"><path d="M5 0.7H14.3V14.3H5M5 10.5V14.3M5 0.7V4.5" stroke="#5a5c5e" stroke-width="1.3" fill="none"/><path d="M0 7.5H10M7 4.5L10 7.5L7 10.5" stroke="#5a5c5e" stroke-width="1.4" fill="none"/></svg>
<div class="a" style="left:36px;top:934px;width:20px;height:1px;background:#555759;"></div>
<svg style="left:40px;top:945px;" width="12" height="12" viewBox="0 0 12 12"><rect x="0" y="0" width="5" height="5" fill="#b0b0b0"/><rect x="6.5" y="0" width="5" height="5" fill="#b0b0b0"/><rect x="0" y="6.5" width="11.5" height="5" fill="#b0b0b0"/></svg>
<div class="a" style="left:36px;top:967px;width:20px;height:1px;background:#555759;"></div>
<svg style="left:38px;top:977px;" width="15" height="15" viewBox="0 0 15 15"><path d="M8 1L14 7L11.5 7.5L8.5 10.5L8.8 13L2.5 6.7L5 7L8 4Z" fill="#a8a8a8"/><path d="M5.5 9.5L1 14" stroke="#a8a8a8" stroke-width="1.5"/></svg>
<svg style="left:68px;top:724px;" width="16" height="11" viewBox="0 0 16 11"><path d="M1 5.5L5.5 10L15 1" stroke="#a8a8a8" stroke-width="2.2" fill="none"/></svg>
<div class="a" style="left:91px;top:718px;width:22px;height:22px;background:#595c5e;border-radius:3px"></div>
<svg style="left:95px;top:722px;" width="14" height="14" viewBox="0 0 14 14"><circle cx="7" cy="7" r="5.8" stroke="#a8a8a8" stroke-width="1.5" fill="none"/><path d="M3 11L11 3" stroke="#a8a8a8" stroke-width="1.5"/></svg>
<div class="a" style="left:118px;top:719px;width:1px;height:20px;background:#555759;"></div>
<svg style="left:127px;top:721px;" width="16" height="16" viewBox="0 0 16 16"><path d="M4 1V14M0.8 10.5L4 14L7.2 10.5" stroke="#a8a8a8" stroke-width="1.5" fill="none"/><text x="11.5" y="7" font-size="9" text-anchor="middle" fill="#a8a8a8" font-family="Liberation Sans">a</text><text x="11.5" y="15.5" font-size="9" text-anchor="middle" fill="#a8a8a8" font-family="Liberation Sans">z</text></svg>
<svg style="left:153px;top:722px;" width="16" height="14" viewBox="0 0 16 14"><path d="M4 0V12.5M0.8 9L4 12.5L7.2 9" stroke="#a8a8a8" stroke-width="1.5" fill="none"/><path d="M9 1.5H15M9 5.5H13M9 9.5H11" stroke="#a8a8a8" stroke-width="1.6"/></svg>
<div class="a" style="left:177px;top:719px;width:1px;height:20px;background:#555759;"></div>
<svg style="left:187px;top:721px;" width="14" height="16" viewBox="0 0 14 16"><path d="M0 1H14M0 15H14" stroke="#a8a8a8" stroke-width="1.5"/><path d="M7 3.3L10.3 6.6H3.7Z M7 12.7L10.3 9.4H3.7Z" fill="#a8a8a8"/></svg>
<svg style="left:212px;top:721px;" width="14" height="16" viewBox="0 0 14 16"><path d="M0 8H14" stroke="#a8a8a8" stroke-width="1.5"/><path d="M7 6L10 2.5H4Z M7 10L10 13.5H4Z" fill="#a8a8a8"/></svg>
<div class="a" style="left:236px;top:719px;width:1px;height:20px;background:#555759;"></div>
<svg style="left:247px;top:722px;" width="12" height="14" viewBox="0 0 12 14"><path d="M6 1V14M1 6L6 1L11 6" stroke="#5d5f61" stroke-width="1.6" fill="none"/></svg>
<svg style="left:273px;top:722px;" width="12" height="14" viewBox="0 0 12 14"><path d="M6 0V13M1 8L6 13L11 8" stroke="#a8a8a8" stroke-width="1.6" fill="none"/></svg>
<svg style="left:297px;top:721px;" width="17" height="17" viewBox="0 0 17 17"><circle cx="7" cy="7.5" r="6" stroke="#a8a8a8" stroke-width="1.6" fill="none"/><path d="M7 4V7.5L9.5 9.5" stroke="#a8a8a8" stroke-width="1.4" fill="none"/><path d="M10 14H15L12.5 16.5Z" fill="#a8a8a8"/></svg>
<div class="t" style="left:321px;top:717.00px;font-size:11px;color:#a8a8a8;font-weight:normal;">»</div>
<svg style="left:338px;top:723px;" width="13" height="13" viewBox="0 0 13 13"><circle cx="6.5" cy="6.5" r="6.5" fill="#d9534f"/><rect x="5.6" y="2.5" width="1.8" height="5" fill="#3c3f41"/><rect x="5.6" y="8.7" width="1.8" height="1.8" fill="#3c3f41"/></svg>
<div class="t" style="left:357px;top:719.50px;font-size:15px;color:#e5584f;font-weight:normal;transform:scaleX(0.9922);transform-origin:0 0;">Tests failed: 2</div>
<div class="t" style="left:452.6px;top:719.50px;font-size:15px;color:#8c8c8c;font-weight:normal;transform:scaleX(1.0086);transform-origin:0 0;">of 2 tests</div>
<div class="a" style="left:61px;top:744px;width:273px;height:22px;background:#0d293e;"></div>
<div class="a" style="left:334px;top:743px;width:1px;height:281px;background:#323232;"></div>
<div class="a" style="left:61px;top:744px;width:273px;height:280px;overflow:hidden">
</div>
<svg style="left:65.5px;top:751px;" width="10" height="6" viewBox="0 0 10 6"><path d="M0.7 0.7L5 5L9.3 0.7" stroke="#a0a0a0" stroke-width="1.2" fill="none"/></svg>
<svg style="left:84.2px;top:749.0px;" width="13" height="13" viewBox="0 0 13 13"><circle cx="6.5" cy="6.5" r="6.5" fill="#c75450"/><rect x="5.6" y="2.6" width="1.8" height="5" fill="#0d293e"/><rect x="5.6" y="8.8" width="1.8" height="1.8" fill="#0d293e"/></svg>
<div class="t" style="left:102.5px;top:745.50px;font-size:15px;color:#bbbbbb;font-weight:normal;transform:scaleX(0.9730);transform-origin:0 0;">Test Results</div>
<svg style="left:83.4px;top:773px;" width="10" height="6" viewBox="0 0 10 6"><path d="M0.7 0.7L5 5L9.3 0.7" stroke="#a0a0a0" stroke-width="1.2" fill="none"/></svg>
<svg style="left:102.4px;top:771.0px;" width="13" height="13" viewBox="0 0 13 13"><circle cx="6.5" cy="6.5" r="6.5" fill="#c75450"/><rect x="5.6" y="2.6" width="1.8" height="5" fill="#3c3f41"/><rect x="5.6" y="8.8" width="1.8" height="1.8" fill="#3c3f41"/></svg>
<div class="t" style="left:120.4px;top:767.50px;font-size:15px;color:#bbbbbb;font-weight:normal;transform:scaleX(0.9634);transform-origin:0 0;">IsRemovedbyOneSpec</div>
<svg style="left:101.4px;top:795px;" width="10" height="6" viewBox="0 0 10 6"><path d="M0.7 0.7L5 5L9.3 0.7" stroke="#a0a0a0" stroke-width="1.2" fill="none"/></svg>
<svg style="left:120.5px;top:793.0px;" width="13" height="13" viewBox="0 0 13 13"><circle cx="6.5" cy="6.5" r="6.5" fill="#c75450"/><rect x="5.6" y="2.6" width="1.8" height="5" fill="#3c3f41"/><rect x="5.6" y="8.8" width="1.8" height="1.8" fill="#3c3f41"/></svg>
<div class="a" style="left:138px;top:789px;width:196px;height:22px;overflow:hidden"><div class="t" style="left:0;top:0.5px;font-size:15px;color:#bbbbbb;transform:scaleX(1.015);transform-origin:0 0">The isRemovedByOne method should</div></div>
<svg style="left:138.5px;top:815.0px;" width="13" height="13" viewBox="0 0 13 13"><circle cx="6.5" cy="6.5" r="6.5" fill="#dba53a"/><path d="M4 4L9 9M9 4L4 9" stroke="#3c3f41" stroke-width="1.6"/></svg>
<div class="t" style="left:156px;top:811.50px;font-size:15px;color:#bbbbbb;font-weight:normal;transform:scaleX(1.0292);transform-origin:0 0;">should work correctly</div>
<svg style="left:138.5px;top:837.0px;" width="13" height="13" viewBox="0 0 13 13"><circle cx="6.5" cy="6.5" r="6.5" fill="#c75450"/><rect x="5.6" y="2.6" width="1.8" height="5" fill="#3c3f41"/><rect x="5.6" y="8.8" width="1.8" height="1.8" fill="#3c3f41"/></svg>
<div class="a" style="left:156px;top:833px;width:178px;height:22px;overflow:hidden"><div class="t" style="left:0;top:0.5px;font-size:15px;color:#bbbbbb;transform:scaleX(1.03);transform-origin:0 0">should be at least 100 times faster</div></div>
<div class="a" style="left:62px;top:1014px;width:106px;height:8px;background:#5a5c5e;"></div>
<div class="a" style="left:347px;top:745px;width:408px;height:21px;background:#3b3b3b;"></div>
<div class="m" style="left:347px;top:746px;color:#909090;">/usr/lib/jvm/java-1.11.0-openjdk-amd64/bin/java ...</div>
<div class="m" style="left:347px;top:768px;color:#bbbbbb;">Testing started at 16.18 ...</div>
<div class="m" style="left:347px;top:966px;color:#ff6b68;">On strings s=bddc and t=bdd: "bdd[c]" was not equal to "bdd[]"</div>
<div class="m" style="left:347px;top:988px;color:#ff6b68;">ScalaTestFailureLocation: tests.IsRemovedbyOneSpec at (<span style="color:#287bde;text-decoration:underline">IsRemovedByOneSpec.scala:33</span>)</div>
<div class="a" style="left:335px;top:1008px;width:1065px;height:16px;overflow:hidden">
<div class="m" style="left:12px;top:2px;color:#bbbbbb">Expected :<span style="color:#ff6b68">"bdd[]"</span></div>
</div>
<div class="a" style="left:1391px;top:745px;width:8px;height:26px;background:#4d4d4d;"></div>
<svg style="left:1409px;top:751px;" width="12" height="14" viewBox="0 0 12 14"><path d="M6 1V14M1 6L6 1L11 6" stroke="#a8a8a8" stroke-width="1.6" fill="none"/></svg>
<svg style="left:1409px;top:777px;" width="12" height="14" viewBox="0 0 12 14"><path d="M6 0V13M1 8L6 13L11 8" stroke="#a8a8a8" stroke-width="1.6" fill="none"/></svg>
<svg style="left:1408px;top:803px;" width="14" height="14" viewBox="0 0 14 14"><path d="M0.5 1H13.5M0.5 5.5H11A2.7 2.7 0 0 1 11 11H6M0.5 11H2.5" stroke="#a8a8a8" stroke-width="1.5" fill="none"/><path d="M6 8.5L3.5 11L6 13.5" stroke="#a8a8a8" stroke-width="1.5" fill="none"/></svg>
<svg style="left:1408px;top:828px;" width="14" height="14" viewBox="0 0 14 14"><path d="M0.5 1H5M0.5 5H5M0.5 9H5M0.5 13H13.5M10 0V9M7 6.5L10 9.5L13 6.5" stroke="#a8a8a8" stroke-width="1.5" fill="none"/></svg>
<svg style="left:1408px;top:855px;" width="14" height="14" viewBox="0 0 14 14"><rect x="3" y="0" width="8" height="3" fill="#a8a8a8"/><path d="M0 4.5H14V11H11V8H3V11H0Z" fill="#a8a8a8"/><rect x="3.7" y="8.7" width="6.6" height="4.6" fill="none" stroke="#a8a8a8" stroke-width="1.3"/></svg>
<svg style="left:1409px;top:880px;" width="12" height="14" viewBox="0 0 12 14"><rect x="0" y="1.5" width="12" height="2" fill="#a8a8a8"/><rect x="4" y="0" width="4" height="2" fill="#a8a8a8"/><path d="M1.5 4.5H10.5L9.8 14H2.2Z" fill="#a8a8a8"/></svg>
<div class="a" style="left:161px;top:1025px;width:57px;height:21px;background:#2d2f30;"></div>
<svg style="left:45px;top:1030px;" width="11" height="13" viewBox="0 0 11 13"><circle cx="2.5" cy="2.5" r="1.8" fill="#a8a8a8"/><circle cx="9" cy="2.5" r="1.8" fill="#a8a8a8"/><path d="M2.5 3V13M9 3C9 7 2.5 6 2.5 10" stroke="#a8a8a8" stroke-width="1.5" fill="none"/></svg>
<div class="t" style="left:61.5px;top:1026.00px;font-size:13px;color:#bbbbbb;font-weight:normal;transform:scaleX(0.9900);transform-origin:0 0;">Version Control</div>
<svg style="left:172px;top:1031px;" width="9" height="11" viewBox="0 0 9 11"><path d="M0 0L9 5.5L0 11Z" fill="#c8c8c8"/></svg>
<div class="t" style="left:188px;top:1026.00px;font-size:13px;color:#e6e6e6;font-weight:normal;transform:scaleX(0.9221);transform-origin:0 0;">Run</div>
<svg style="left:231px;top:1031px;" width="11" height="10" viewBox="0 0 11 10"><path d="M0 0.8H2M0 4.8H2M0 8.8H2M3.5 0.8H11M3.5 4.8H11M3.5 8.8H11" stroke="#a8a8a8" stroke-width="1.5"/></svg>
<div class="t" style="left:246px;top:1026.00px;font-size:13px;color:#bbbbbb;font-weight:normal;transform:scaleX(0.9376);transform-origin:0 0;">TODO</div>
<svg style="left:304.5px;top:1030px;" width="11" height="11" viewBox="0 0 11 11"><circle cx="5.5" cy="5.5" r="5.5" fill="#a8a8a8"/><rect x="4.7" y="2" width="1.6" height="4.3" fill="#3c3f41"/><rect x="4.7" y="7.3" width="1.6" height="1.6" fill="#3c3f41"/></svg>
<div class="t" style="left:320px;top:1026.00px;font-size:13px;color:#bbbbbb;font-weight:normal;transform:scaleX(0.9650);transform-origin:0 0;">Problems</div>
<svg style="left:395.5px;top:1030px;" width="12" height="11" viewBox="0 0 12 11"><rect x="0" y="0" width="12" height="11" fill="#a8a8a8"/><path d="M2.5 2.5L5 5L2.5 7.5M6 8.5H9.5" stroke="#3c3f41" stroke-width="1.3" fill="none"/></svg>
<div class="t" style="left:412px;top:1026.00px;font-size:13px;color:#bbbbbb;font-weight:normal;transform:scaleX(0.9975);transform-origin:0 0;">Terminal</div>
<svg style="left:481.5px;top:1029.5px;" width="13" height="13" viewBox="0 0 13 13"><path d="M3.3 0.5H9.7L12.8 6.5L9.7 12.5H3.3L0.2 6.5Z" fill="#a8a8a8"/><path d="M5 3.5L9 6.5L5 9.5Z" fill="#3c3f41"/></svg>
<div class="t" style="left:499px;top:1026.00px;font-size:13px;color:#bbbbbb;font-weight:normal;transform:scaleX(0.9306);transform-origin:0 0;">Services</div>
<svg style="left:566px;top:1029.5px;" width="12" height="13" viewBox="0 0 12 13"><path d="M0.8 3.5L4 0.5L8 3.8L6.5 5.5Z" fill="#a8a8a8"/><path d="M5.5 5L11.5 12" stroke="#a8a8a8" stroke-width="2"/></svg>
<div class="t" style="left:583px;top:1026.00px;font-size:13px;color:#bbbbbb;font-weight:normal;transform:scaleX(0.9681);transform-origin:0 0;">Build</div>
<svg style="left:632px;top:1030px;" width="12" height="12" viewBox="0 0 12 12"><path d="M0.7 1.2H11.3V4M0.7 1.2V10.8H5.5" stroke="#a8a8a8" stroke-width="1.3" fill="none"/><path d="M9 6L11.8 7.5V10.5L9 12L6.2 10.5V7.5Z" fill="#a8a8a8"/></svg>
<div class="t" style="left:648px;top:1026.00px;font-size:13px;color:#bbbbbb;font-weight:normal;transform:scaleX(0.9853);transform-origin:0 0;">sbt shell</div>
<svg style="left:718px;top:1029.5px;" width="13" height="13" viewBox="0 0 13 13"><path d="M6.5 0.5L12.5 3.5L6.5 6.5L0.5 3.5Z" fill="#a8a8a8"/><path d="M0.5 6.5L6.5 9.5L12.5 6.5M0.5 9.5L6.5 12.5L12.5 9.5" stroke="#a8a8a8" stroke-width="1.3" fill="none"/></svg>
<div class="t" style="left:735px;top:1026.00px;font-size:13px;color:#bbbbbb;font-weight:normal;transform:scaleX(0.9504);transform-origin:0 0;">Dependencies</div>
<svg style="left:15.5px;top:1051px;" width="14" height="14" viewBox="0 0 14 14"><rect x="0.7" y="3.3" width="9" height="9" fill="none" stroke="#a8a8a8" stroke-width="1.3"/><path d="M3.3 0.7H13.3V10.7" stroke="#a8a8a8" stroke-width="1.3" fill="none"/></svg>
<div class="t" style="left:38px;top:1047.00px;font-size:15px;color:#bbbbbb;font-weight:normal;transform:scaleX(1.0043);transform-origin:0 0;">Toplevel definition isRemovedByOneSlow is defined in  /tmp/A1140-scala3-r1-warmup-A1140-scala3-r1-warmup-target/warmup/$package.classand also in  /u/65/ahrenb..</div>
<svg style="left:1199px;top:1050px;" width="14" height="14" viewBox="0 0 14 14"><circle cx="7" cy="7" r="6" stroke="#a0a0a0" stroke-width="1.4" fill="none"/><path d="M7 7L9.5 4" stroke="#a0a0a0" stroke-width="1.5"/><circle cx="7" cy="7" r="1" fill="#a0a0a0"/></svg>
<div class="t" style="left:1225px;top:1047.00px;font-size:15px;color:#bbbbbb;font-weight:normal;transform:scaleX(0.8629);transform-origin:0 0;">1:1</div>
<div class="t" style="left:1256.4px;top:1047.00px;font-size:15px;color:#bbbbbb;font-weight:normal;transform:scaleX(0.8735);transform-origin:0 0;">LF</div>
<div class="t" style="left:1284.6px;top:1047.00px;font-size:15px;color:#bbbbbb;font-weight:normal;transform:scaleX(0.8776);transform-origin:0 0;">UTF-8</div>
<div class="t" style="left:1334px;top:1047.00px;font-size:15px;color:#bbbbbb;font-weight:normal;transform:scaleX(0.9376);transform-origin:0 0;">2 spaces</div>
<svg style="left:1402px;top:1050px;" width="12" height="13" viewBox="0 0 12 13"><path d="M1.5 5.2V3.3A2.7 2.7 0 0 1 6.9 3.3" stroke="#b8b8b8" stroke-width="1.5" fill="none"/><rect x="3.5" y="6" width="8" height="7" fill="#b8b8b8"/></svg>
<div class="a" style="left:1425.7px;top:1049.6px;width:14.6px;height:14.1px;background:#5a9a3c;"></div>
<div class="t" style="left:1427.3px;top:1047.00px;font-size:9.5px;color:#2b4a22;font-weight:bold;">[T]</div>
<svg style="left:345.7px;top:75px;" width="15" height="16" viewBox="0 0 15 16"><path d="M0.2 3.8L4.3 0V3.8Z" fill="#9aa7b0"/><path d="M5.3 0H10.4V8H6V14.1H0.2V5.3H5.3Z" fill="#8f9ba3"/><path d="M5.2 7.2H14V15.6H5.2Z" fill="#3c3f41"/><path d="M6.1 8.8L13.3 8.1V14.4L6.1 14.9Z" fill="#df2a26"/><path d="M6.1 10.4H13.3V11M6.1 12.6H13.3" stroke="#7c3434" stroke-width="0.7"/></svg>
<svg style="left:982px;top:74px;" width="24" height="14" viewBox="0 0 24 14"><circle cx="9" cy="3.5" r="3" fill="#a0a0a0"/><path d="M3.5 13C3.5 9 5.5 7.5 9 7.5S14.5 9 14.5 13Z" fill="#a0a0a0"/><circle cx="5" cy="4" r="3" fill="#a0a0a0" stroke="#3c3f41" stroke-width="1"/><path d="M-0.5 13.5C-0.5 9.5 1.5 8 5 8S10.5 9.5 10.5 13.5Z" fill="#a0a0a0" stroke="#3c3f41" stroke-width="1"/><path d="M16 6H23L19.5 9.5Z" fill="#a0a0a0"/></svg>
<div class="a" style="left:1015px;top:72px;width:1px;height:20px;background:#555759;"></div>
<svg style="left:1024px;top:73px;" width="15" height="16" viewBox="0 0 15 16"><path d="M0.5 5.2L5.2 0.5L9.6 4.2L8.2 5.6L5.6 4.4L3.2 6.8Z" fill="#4aa55a"/><path d="M6.2 5.6L13.6 14" stroke="#4aa55a" stroke-width="2.8"/></svg>
<div class="a" style="left:1051px;top:71px;width:203px;height:22px;background:transparent;border:1px solid #5e6060;border-radius:3px"></div>
<svg style="left:1062px;top:76px;" width="15" height="13" viewBox="0 0 15 13"><path d="M5 1V11L0 6Z" fill="#b0623a"/><path d="M6.5 0L12 5.5H6.5Z" fill="#52935a"/><path d="M6.5 6.5L14.5 5.5V7.2L6.5 8.2Z M6.5 9L14.5 8V9.7L6.5 10.7Z M6.5 11.5L14.5 10.5V12.5L6.5 13Z" fill="#a83a38"/></svg>
<div class="t" style="left:1080px;top:72.50px;font-size:15px;color:#bbbbbb;font-weight:normal;transform:scaleX(0.9724);transform-origin:0 0;">IsRemovedbyOneSpec</div>
<svg style="left:1236px;top:81px;" width="10" height="6" viewBox="0 0 10 6"><path d="M0 0H10L5 5.5Z" fill="#a0a0a0"/></svg>
<svg style="left:1268px;top:76px;" width="11" height="13" viewBox="0 0 11 13"><path d="M0 0L11 6.5L0 13Z" fill="#499c54"/></svg>
<svg style="left:1292px;top:75px;" width="14" height="14" viewBox="0 0 14 14"><path d="M3.5 0.5L5 3M10.5 0.5L9 3" stroke="#499c54" stroke-width="1.3"/><ellipse cx="7" cy="8" rx="4.5" ry="5.5" fill="#499c54"/><path d="M0.5 6H13.5M0.5 9H13.5M0.5 12H13.5" stroke="#499c54" stroke-width="1.3"/><path d="M4 6.5H10M4 9.5H10" stroke="#3c3f41" stroke-width="1"/></svg>
<svg style="left:1317px;top:75px;" width="17" height="15" viewBox="0 0 17 15"><path d="M1 1.5L5.5 0.5L10 1.5V6.5C10 9.5 8 11.5 5.5 12.5C3 11.5 1 9.5 1 6.5Z" fill="#a0a0a0"/><path d="M5.5 1V12" stroke="#3c3f41" stroke-width="0.8"/><path d="M9 6L16 10.5L9 15Z" fill="#499c54" stroke="#3c3f41" stroke-width="0.8"/></svg>
<div class="a" style="left:1346px;top:77px;width:10px;height:10px;background:#5a5c5e;"></div>
<div class="a" style="left:1367px;top:72px;width:1px;height:20px;background:#555759;"></div>
<svg style="left:1377px;top:75px;" width="15" height="15" viewBox="0 0 15 15"><circle cx="6" cy="6" r="4.6" stroke="#b0b0b0" stroke-width="1.9" fill="none"/><path d="M9.3 9.3L13.3 13.3" stroke="#b0b0b0" stroke-width="2.1"/></svg>
<svg style="left:1403px;top:75px;" width="14" height="14" viewBox="0 0 14 14"><path d="M5.52 0.57 L8.48 0.57 L7.90 2.39 L10.55 3.92 L11.83 2.50 L13.31 5.07 L11.44 5.47 L11.44 8.53 L13.31 8.93 L11.83 11.50 L10.55 10.08 L7.90 11.61 L8.48 13.43 L5.52 13.43 L6.10 11.61 L3.45 10.08 L2.17 11.50 L0.69 8.93 L2.56 8.53 L2.56 5.47 L0.69 5.07 L2.17 2.50 L3.45 3.92 L6.10 2.39Z" fill="#b0b0b0" stroke="#b0b0b0" stroke-width="0.6" stroke-linejoin="round"/><circle cx="7" cy="7" r="2" fill="#3c3f41"/></svg>
<svg style="left:1429px;top:75px;" width="15" height="15" viewBox="0 0 15 15"><defs><linearGradient id="jg" x1="0.2" y1="0" x2="0.3" y2="1"><stop offset="0" stop-color="#f4ef4a"/><stop offset="0.55" stop-color="#7ed88f"/><stop offset="1" stop-color="#1fc3ee"/></linearGradient><linearGradient id="jg2" x1="0" y1="0" x2="0.4" y2="1"><stop offset="0" stop-color="#21c6b6"/><stop offset="0.5" stop-color="#1c9ee6"/><stop offset="1" stop-color="#1c5fd0"/></linearGradient></defs><path d="M2 0.7Q0 3 0 7.2Q0 11.5 2 13.8Q3 14.8 4.5 14L13 8.6Q14.3 7.3 13 6L4.5 0.6Q3 -0.2 2 0.7Z" fill="url(#jg)"/><path d="M6.8 2.7L13 6Q14.3 7.3 13 8.6L4.5 14Q3.6 14.5 2.8 14.2Q7 12 7.8 7.8Q8 4.8 6.8 2.7Z" fill="url(#jg2)"/></svg>
</body></html>
